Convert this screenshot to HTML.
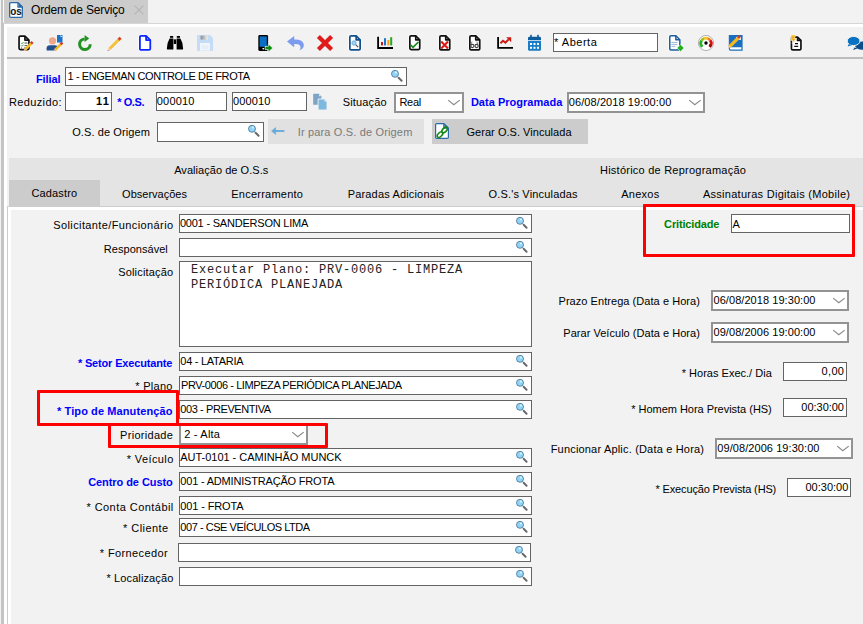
<!DOCTYPE html>
<html><head><meta charset="utf-8"><style>
html,body{margin:0;padding:0}
body{width:863px;height:624px;overflow:hidden;position:relative;background:#f2f2f2;font-family:"Liberation Sans", sans-serif}
.t{position:absolute;white-space:nowrap;line-height:14px;font-family:"Liberation Sans", sans-serif}
svg{position:absolute}
</style></head><body>
<div style="position:absolute;left:1px;top:0px;width:3px;height:624px;background:#c4c4c4"></div>
<div style="position:absolute;left:3px;top:0px;width:1px;height:23px;background:#fafafa"></div>
<div style="position:absolute;left:4px;top:23px;width:3px;height:601px;background:#fff"></div>
<div style="position:absolute;left:4px;top:0px;width:144px;height:23px;background:#cccccc"></div>
<div style="position:absolute;left:4px;top:23px;width:859px;height:1px;background:#d6d6d6"></div>
<div style="position:absolute;left:4px;top:24px;width:859px;height:3px;background:#fff"></div>
<div style="position:absolute;left:7px;top:57px;width:856px;height:2px;background:#bdbdbd"></div>
<div style="position:absolute;left:9px;top:158px;width:854px;height:48px;background:#e4e4e4"></div>
<div style="position:absolute;left:9px;top:180px;width:91px;height:26px;background:#cccccc"></div>
<div style="position:absolute;left:7px;top:206px;width:856px;height:1px;background:#cdcdcd"></div>
<div style="position:absolute;left:7px;top:206px;width:1px;height:418px;background:#cdcdcd"></div>
<div style="position:absolute;left:8px;top:207px;width:855px;height:3px;background:#fff"></div>
<div style="position:absolute;left:8px;top:207px;width:3px;height:417px;background:#fff"></div>
<div style="position:absolute;left:65px;top:67px;width:342px;height:19px;background:#fff;border:1px solid #646464;box-sizing:border-box"></div>
<svg style="position:absolute;left:390px;top:69px" width="14" height="14" viewBox="0 0 14 14"><line x1="8.6" y1="8.8" x2="11.6" y2="11.8" stroke="#6a6a6a" stroke-width="2" stroke-linecap="round"/><circle cx="5" cy="4.8" r="3.5" fill="#92d4f7" stroke="#3f6f8f" stroke-width="0.8"/><circle cx="6" cy="3.6" r="1" fill="#e6f6ff"/></svg>
<div style="position:absolute;left:65px;top:92px;width:47px;height:19px;background:#fff;border:1px solid #646464;box-sizing:border-box"></div>
<div style="position:absolute;left:156px;top:92px;width:71px;height:19px;background:#fff;border:1px solid #646464;box-sizing:border-box"></div>
<div style="position:absolute;left:232px;top:92px;width:75px;height:19px;background:#fff;border:1px solid #646464;box-sizing:border-box"></div>
<div style="position:absolute;left:394px;top:92px;width:70px;height:21px;background:#fff;border:2px solid #939393;box-sizing:border-box"></div>
<svg style="position:absolute;left:447px;top:99.0px" width="14" height="8" viewBox="0 0 14 8"><polyline points="1.2,1.1 6.8,5.8 12.7,1.1" fill="none" stroke="#8a8a8a" stroke-width="1.2"/></svg>
<div style="position:absolute;left:567px;top:92px;width:138px;height:21px;background:#fff;border:2px solid #939393;box-sizing:border-box"></div>
<svg style="position:absolute;left:688px;top:99.0px" width="14" height="8" viewBox="0 0 14 8"><polyline points="1.2,1.1 6.8,5.8 12.7,1.1" fill="none" stroke="#8a8a8a" stroke-width="1.2"/></svg>
<div style="position:absolute;left:157px;top:122px;width:107px;height:20px;background:#fff;border:1px solid #646464;box-sizing:border-box"></div>
<svg style="position:absolute;left:247px;top:124px" width="14" height="14" viewBox="0 0 14 14"><line x1="8.6" y1="8.8" x2="11.6" y2="11.8" stroke="#6a6a6a" stroke-width="2" stroke-linecap="round"/><circle cx="5" cy="4.8" r="3.5" fill="#92d4f7" stroke="#3f6f8f" stroke-width="0.8"/><circle cx="6" cy="3.6" r="1" fill="#e6f6ff"/></svg>
<div style="position:absolute;left:553px;top:33px;width:105px;height:19px;background:#fff;border:1px solid #646464;box-sizing:border-box"></div>
<div style="position:absolute;left:268px;top:119px;width:156px;height:25px;background:#e1e1e1"></div>
<div style="position:absolute;left:432px;top:119px;width:156px;height:25px;background:#cccccc"></div>
<div style="position:absolute;left:179px;top:214px;width:353px;height:19px;background:#fff;border:1px solid #646464;box-sizing:border-box"></div>
<svg style="position:absolute;left:515px;top:216px" width="14" height="14" viewBox="0 0 14 14"><line x1="8.6" y1="8.8" x2="11.6" y2="11.8" stroke="#6a6a6a" stroke-width="2" stroke-linecap="round"/><circle cx="5" cy="4.8" r="3.5" fill="#92d4f7" stroke="#3f6f8f" stroke-width="0.8"/><circle cx="6" cy="3.6" r="1" fill="#e6f6ff"/></svg>
<div style="position:absolute;left:179px;top:238px;width:353px;height:19px;background:#fff;border:1px solid #646464;box-sizing:border-box"></div>
<svg style="position:absolute;left:515px;top:240px" width="14" height="14" viewBox="0 0 14 14"><line x1="8.6" y1="8.8" x2="11.6" y2="11.8" stroke="#6a6a6a" stroke-width="2" stroke-linecap="round"/><circle cx="5" cy="4.8" r="3.5" fill="#92d4f7" stroke="#3f6f8f" stroke-width="0.8"/><circle cx="6" cy="3.6" r="1" fill="#e6f6ff"/></svg>
<div style="position:absolute;left:179px;top:352px;width:353px;height:19px;background:#fff;border:1px solid #646464;box-sizing:border-box"></div>
<svg style="position:absolute;left:515px;top:354px" width="14" height="14" viewBox="0 0 14 14"><line x1="8.6" y1="8.8" x2="11.6" y2="11.8" stroke="#6a6a6a" stroke-width="2" stroke-linecap="round"/><circle cx="5" cy="4.8" r="3.5" fill="#92d4f7" stroke="#3f6f8f" stroke-width="0.8"/><circle cx="6" cy="3.6" r="1" fill="#e6f6ff"/></svg>
<div style="position:absolute;left:179px;top:376px;width:353px;height:19px;background:#fff;border:1px solid #646464;box-sizing:border-box"></div>
<svg style="position:absolute;left:515px;top:378px" width="14" height="14" viewBox="0 0 14 14"><line x1="8.6" y1="8.8" x2="11.6" y2="11.8" stroke="#6a6a6a" stroke-width="2" stroke-linecap="round"/><circle cx="5" cy="4.8" r="3.5" fill="#92d4f7" stroke="#3f6f8f" stroke-width="0.8"/><circle cx="6" cy="3.6" r="1" fill="#e6f6ff"/></svg>
<div style="position:absolute;left:179px;top:400px;width:353px;height:19px;background:#fff;border:1px solid #646464;box-sizing:border-box"></div>
<svg style="position:absolute;left:515px;top:402px" width="14" height="14" viewBox="0 0 14 14"><line x1="8.6" y1="8.8" x2="11.6" y2="11.8" stroke="#6a6a6a" stroke-width="2" stroke-linecap="round"/><circle cx="5" cy="4.8" r="3.5" fill="#92d4f7" stroke="#3f6f8f" stroke-width="0.8"/><circle cx="6" cy="3.6" r="1" fill="#e6f6ff"/></svg>
<div style="position:absolute;left:179px;top:448px;width:353px;height:19px;background:#fff;border:1px solid #646464;box-sizing:border-box"></div>
<svg style="position:absolute;left:515px;top:450px" width="14" height="14" viewBox="0 0 14 14"><line x1="8.6" y1="8.8" x2="11.6" y2="11.8" stroke="#6a6a6a" stroke-width="2" stroke-linecap="round"/><circle cx="5" cy="4.8" r="3.5" fill="#92d4f7" stroke="#3f6f8f" stroke-width="0.8"/><circle cx="6" cy="3.6" r="1" fill="#e6f6ff"/></svg>
<div style="position:absolute;left:179px;top:472px;width:353px;height:19px;background:#fff;border:1px solid #646464;box-sizing:border-box"></div>
<svg style="position:absolute;left:515px;top:474px" width="14" height="14" viewBox="0 0 14 14"><line x1="8.6" y1="8.8" x2="11.6" y2="11.8" stroke="#6a6a6a" stroke-width="2" stroke-linecap="round"/><circle cx="5" cy="4.8" r="3.5" fill="#92d4f7" stroke="#3f6f8f" stroke-width="0.8"/><circle cx="6" cy="3.6" r="1" fill="#e6f6ff"/></svg>
<div style="position:absolute;left:179px;top:496px;width:353px;height:19px;background:#fff;border:1px solid #646464;box-sizing:border-box"></div>
<svg style="position:absolute;left:515px;top:498px" width="14" height="14" viewBox="0 0 14 14"><line x1="8.6" y1="8.8" x2="11.6" y2="11.8" stroke="#6a6a6a" stroke-width="2" stroke-linecap="round"/><circle cx="5" cy="4.8" r="3.5" fill="#92d4f7" stroke="#3f6f8f" stroke-width="0.8"/><circle cx="6" cy="3.6" r="1" fill="#e6f6ff"/></svg>
<div style="position:absolute;left:179px;top:518px;width:353px;height:19px;background:#fff;border:1px solid #646464;box-sizing:border-box"></div>
<svg style="position:absolute;left:515px;top:520px" width="14" height="14" viewBox="0 0 14 14"><line x1="8.6" y1="8.8" x2="11.6" y2="11.8" stroke="#6a6a6a" stroke-width="2" stroke-linecap="round"/><circle cx="5" cy="4.8" r="3.5" fill="#92d4f7" stroke="#3f6f8f" stroke-width="0.8"/><circle cx="6" cy="3.6" r="1" fill="#e6f6ff"/></svg>
<div style="position:absolute;left:179px;top:567px;width:353px;height:19px;background:#fff;border:1px solid #646464;box-sizing:border-box"></div>
<svg style="position:absolute;left:515px;top:569px" width="14" height="14" viewBox="0 0 14 14"><line x1="8.6" y1="8.8" x2="11.6" y2="11.8" stroke="#6a6a6a" stroke-width="2" stroke-linecap="round"/><circle cx="5" cy="4.8" r="3.5" fill="#92d4f7" stroke="#3f6f8f" stroke-width="0.8"/><circle cx="6" cy="3.6" r="1" fill="#e6f6ff"/></svg>
<div style="position:absolute;left:178px;top:543px;width:353px;height:19px;background:#fff;border:1px solid #646464;box-sizing:border-box"></div>
<svg style="position:absolute;left:514px;top:545px" width="14" height="14" viewBox="0 0 14 14"><line x1="8.6" y1="8.8" x2="11.6" y2="11.8" stroke="#6a6a6a" stroke-width="2" stroke-linecap="round"/><circle cx="5" cy="4.8" r="3.5" fill="#92d4f7" stroke="#3f6f8f" stroke-width="0.8"/><circle cx="6" cy="3.6" r="1" fill="#e6f6ff"/></svg>
<div style="position:absolute;left:179px;top:261px;width:353px;height:86px;background:#fff;border:1px solid #646464;box-sizing:border-box"></div>
<div style="position:absolute;left:179px;top:424px;width:129px;height:21px;background:#fff;border:2px solid #939393;box-sizing:border-box"></div>
<svg style="position:absolute;left:291px;top:431.0px" width="14" height="8" viewBox="0 0 14 8"><polyline points="1.2,1.1 6.8,5.8 12.7,1.1" fill="none" stroke="#8a8a8a" stroke-width="1.2"/></svg>
<div style="position:absolute;left:731px;top:214px;width:119px;height:19px;background:#fff;border:1px solid #646464;box-sizing:border-box"></div>
<div style="position:absolute;left:711px;top:290px;width:138px;height:21px;background:#fff;border:2px solid #939393;box-sizing:border-box"></div>
<svg style="position:absolute;left:832px;top:297.0px" width="14" height="8" viewBox="0 0 14 8"><polyline points="1.2,1.1 6.8,5.8 12.7,1.1" fill="none" stroke="#8a8a8a" stroke-width="1.2"/></svg>
<div style="position:absolute;left:711px;top:322px;width:138px;height:21px;background:#fff;border:2px solid #939393;box-sizing:border-box"></div>
<svg style="position:absolute;left:832px;top:329.0px" width="14" height="8" viewBox="0 0 14 8"><polyline points="1.2,1.1 6.8,5.8 12.7,1.1" fill="none" stroke="#8a8a8a" stroke-width="1.2"/></svg>
<div style="position:absolute;left:783px;top:362px;width:64px;height:19px;background:#fff;border:1px solid #646464;box-sizing:border-box"></div>
<div style="position:absolute;left:783px;top:398px;width:64px;height:19px;background:#fff;border:1px solid #646464;box-sizing:border-box"></div>
<div style="position:absolute;left:715px;top:438px;width:138px;height:21px;background:#fff;border:2px solid #939393;box-sizing:border-box"></div>
<svg style="position:absolute;left:836px;top:445.0px" width="14" height="8" viewBox="0 0 14 8"><polyline points="1.2,1.1 6.8,5.8 12.7,1.1" fill="none" stroke="#8a8a8a" stroke-width="1.2"/></svg>
<div style="position:absolute;left:787px;top:478px;width:64px;height:19px;background:#fff;border:1px solid #646464;box-sizing:border-box"></div>
<div style="position:absolute;left:37px;top:390px;width:142px;height:36px;border:3px solid #ff0000;box-sizing:border-box;border-radius:1px"></div>
<div style="position:absolute;left:108px;top:423px;width:220px;height:25px;border:3px solid #ff0000;box-sizing:border-box;border-radius:1px"></div>
<div style="position:absolute;left:643px;top:204px;width:212px;height:53px;border:3px solid #ff0000;box-sizing:border-box;border-radius:1px"></div>
<div class="t" style="left:31.0px;top:3px;font-size:12px;font-weight:normal;color:#000;letter-spacing:-0.194px">Ordem de Serviço</div>
<div class="t" style="left:36.0px;top:72px;font-size:11px;font-weight:bold;color:#0000ff;letter-spacing:-0.113px">Filial</div>
<div class="t" style="left:8.9px;top:95px;font-size:11px;font-weight:normal;color:#000;letter-spacing:0.382px">Reduzido:</div>
<div class="t" style="left:117.2px;top:95px;font-size:11px;font-weight:bold;color:#0000ff;letter-spacing:-0.409px">* O.S.</div>
<div class="t" style="left:72.2px;top:125px;font-size:11px;font-weight:normal;color:#000;letter-spacing:0.098px">O.S. de Origem</div>
<div class="t" style="left:342.8px;top:95px;font-size:11px;font-weight:normal;color:#000;letter-spacing:0.127px">Situação</div>
<div class="t" style="left:470.9px;top:95px;font-size:11px;font-weight:bold;color:#0000ff;letter-spacing:0.022px">Data Programada</div>
<div class="t" style="left:297.7px;top:125px;font-size:11px;font-weight:normal;color:#7a7a7a;letter-spacing:0.159px">Ir para O.S. de Origem</div>
<div class="t" style="left:466.5px;top:125px;font-size:11px;font-weight:normal;color:#000;letter-spacing:0.034px">Gerar O.S. Vinculada</div>
<div class="t" style="left:67.5px;top:69px;font-size:11px;font-weight:normal;color:#000;letter-spacing:-0.387px">1 - ENGEMAN CONTROLE DE FROTA</div>
<div class="t" style="left:96.0px;top:94px;font-size:11px;font-weight:bold;color:#000;letter-spacing:1.259px">11</div>
<div class="t" style="left:156.8px;top:94px;font-size:11px;font-weight:normal;color:#000;letter-spacing:0.196px">000010</div>
<div class="t" style="left:233.1px;top:94px;font-size:11px;font-weight:normal;color:#000;letter-spacing:0.136px">000010</div>
<div class="t" style="left:399.4px;top:95px;font-size:11px;font-weight:normal;color:#000;letter-spacing:-0.275px">Real</div>
<div class="t" style="left:568.8px;top:95px;font-size:11px;font-weight:normal;color:#000;letter-spacing:0.087px">06/08/2018 19:00:00</div>
<div class="t" style="left:554.0px;top:35px;font-size:11px;font-weight:normal;color:#000;letter-spacing:0.523px">* Aberta</div>
<div class="t" style="left:174.2px;top:163px;font-size:11px;font-weight:normal;color:#000;letter-spacing:0.044px">Avaliação de O.S.s</div>
<div class="t" style="left:600.0px;top:163px;font-size:11px;font-weight:normal;color:#000;letter-spacing:0.235px">Histórico de Reprogramação</div>
<div class="t" style="left:31.5px;top:186px;font-size:11px;font-weight:normal;color:#000;letter-spacing:0.137px">Cadastro</div>
<div class="t" style="left:122.1px;top:187px;font-size:11px;font-weight:normal;color:#000;letter-spacing:0.009px">Observações</div>
<div class="t" style="left:231.3px;top:187px;font-size:11px;font-weight:normal;color:#000;letter-spacing:0.237px">Encerramento</div>
<div class="t" style="left:347.7px;top:187px;font-size:11px;font-weight:normal;color:#000;letter-spacing:0.167px">Paradas Adicionais</div>
<div class="t" style="left:488.5px;top:187px;font-size:11px;font-weight:normal;color:#000;letter-spacing:0.170px">O.S.&#x27;s Vinculadas</div>
<div class="t" style="left:621.2px;top:187px;font-size:11px;font-weight:normal;color:#000;letter-spacing:0.259px">Anexos</div>
<div class="t" style="left:702.9px;top:187px;font-size:11px;font-weight:normal;color:#000;letter-spacing:0.275px">Assinaturas Digitais (Mobile)</div>
<div class="t" style="left:53.3px;top:218px;font-size:11px;font-weight:normal;color:#000;letter-spacing:0.387px">Solicitante/Funcionário</div>
<div class="t" style="left:103.8px;top:242px;font-size:11px;font-weight:normal;color:#000;letter-spacing:0.041px">Responsável</div>
<div class="t" style="left:118.2px;top:265px;font-size:11px;font-weight:normal;color:#000;letter-spacing:0.170px">Solicitação</div>
<div class="t" style="left:77.9px;top:356px;font-size:11px;font-weight:bold;color:#0000ff;letter-spacing:-0.159px">* Setor Executante</div>
<div class="t" style="left:135.3px;top:379px;font-size:11px;font-weight:normal;color:#000;letter-spacing:0.269px">* Plano</div>
<div class="t" style="left:57.0px;top:404px;font-size:11px;font-weight:bold;color:#0000ff;letter-spacing:0.101px">* Tipo de Manutenção</div>
<div class="t" style="left:120.1px;top:428px;font-size:11px;font-weight:normal;color:#000;letter-spacing:0.295px">Prioridade</div>
<div class="t" style="left:126.7px;top:452px;font-size:11px;font-weight:normal;color:#000;letter-spacing:0.397px">* Veículo</div>
<div class="t" style="left:88.2px;top:475px;font-size:11px;font-weight:bold;color:#0000ff;letter-spacing:-0.069px">Centro de Custo</div>
<div class="t" style="left:86.4px;top:500px;font-size:11px;font-weight:normal;color:#000;letter-spacing:0.453px">* Conta Contábil</div>
<div class="t" style="left:123.1px;top:521px;font-size:11px;font-weight:normal;color:#000;letter-spacing:0.440px">* Cliente</div>
<div class="t" style="left:99.8px;top:546px;font-size:11px;font-weight:normal;color:#000;letter-spacing:0.391px">* Fornecedor</div>
<div class="t" style="left:106.5px;top:571px;font-size:11px;font-weight:normal;color:#000;letter-spacing:0.114px">* Localização</div>
<div class="t" style="left:179.9px;top:216px;font-size:11px;font-weight:normal;color:#000;letter-spacing:-0.208px">0001 - SANDERSON LIMA</div>
<div class="t" style="left:180.3px;top:354px;font-size:11px;font-weight:normal;color:#000;letter-spacing:-0.267px">04 - LATARIA</div>
<div class="t" style="left:181.0px;top:378px;font-size:11px;font-weight:normal;color:#000;letter-spacing:-0.416px">PRV-0006 - LIMPEZA PERIÓDICA PLANEJADA</div>
<div class="t" style="left:180.3px;top:402px;font-size:11px;font-weight:normal;color:#000;letter-spacing:-0.407px">003 - PREVENTIVA</div>
<div class="t" style="left:184.2px;top:427px;font-size:11px;font-weight:normal;color:#000;letter-spacing:0.221px">2 - Alta</div>
<div class="t" style="left:180.3px;top:450px;font-size:11px;font-weight:normal;color:#000;letter-spacing:-0.029px">AUT-0101 - CAMINHÃO MUNCK</div>
<div class="t" style="left:180.3px;top:474px;font-size:11px;font-weight:normal;color:#000;letter-spacing:-0.188px">001 - ADMINISTRAÇÃO FROTA</div>
<div class="t" style="left:180.3px;top:499px;font-size:11px;font-weight:normal;color:#000;letter-spacing:-0.129px">001 - FROTA</div>
<div class="t" style="left:180.3px;top:520px;font-size:11px;font-weight:normal;color:#000;letter-spacing:-0.450px">007 - CSE VEÍCULOS LTDA</div>
<div class="t" style="left:664.1px;top:217px;font-size:11px;font-weight:bold;color:#008000;letter-spacing:-0.146px">Criticidade</div>
<div class="t" style="left:732.5px;top:217px;font-size:11px;font-weight:normal;color:#000;letter-spacing:0.000px">A</div>
<div class="t" style="left:558.5px;top:294px;font-size:11px;font-weight:normal;color:#000;letter-spacing:0.053px">Prazo Entrega (Data e Hora)</div>
<div class="t" style="left:713.5px;top:293px;font-size:11px;font-weight:normal;color:#000;letter-spacing:0.059px">06/08/2018 19:30:00</div>
<div class="t" style="left:563.3px;top:326px;font-size:11px;font-weight:normal;color:#000;letter-spacing:0.033px">Parar Veículo (Data e Hora)</div>
<div class="t" style="left:713.5px;top:325px;font-size:11px;font-weight:normal;color:#000;letter-spacing:0.059px">09/08/2006 19:00:00</div>
<div class="t" style="left:681.7px;top:366px;font-size:11px;font-weight:normal;color:#000;letter-spacing:0.013px">* Horas Exec./ Dia</div>
<div class="t" style="left:821.5px;top:364px;font-size:11px;font-weight:normal;color:#000;letter-spacing:0.359px">0,00</div>
<div class="t" style="left:631.2px;top:402px;font-size:11px;font-weight:normal;color:#000;letter-spacing:-0.024px">* Homem Hora Prevista (HS)</div>
<div class="t" style="left:801.3px;top:400px;font-size:11px;font-weight:normal;color:#000;letter-spacing:-0.018px">00:30:00</div>
<div class="t" style="left:550.7px;top:442px;font-size:11px;font-weight:normal;color:#000;letter-spacing:0.184px">Funcionar Aplic. (Data e Hora)</div>
<div class="t" style="left:717.3px;top:441px;font-size:11px;font-weight:normal;color:#000;letter-spacing:0.070px">09/08/2006 19:30:00</div>
<div class="t" style="left:655.5px;top:482px;font-size:11px;font-weight:normal;color:#000;letter-spacing:-0.144px">* Execução Prevista (HS)</div>
<div class="t" style="left:805.5px;top:480px;font-size:11px;font-weight:normal;color:#000;letter-spacing:-0.004px">00:30:00</div>
<div class="t" style="left:191px;top:263px;font-family:'Liberation Mono', monospace;font-size:12px;letter-spacing:0.8px;line-height:14px;color:#222">Executar Plano: PRV-0006 - LIMPEZA</div>
<div class="t" style="left:191px;top:278px;font-family:'Liberation Mono', monospace;font-size:12px;letter-spacing:0.8px;line-height:14px;color:#222">PERIÓDICA PLANEJADA</div>
<svg style="left:16px;top:33px" width="20" height="20" viewBox="0 0 20 20"><g transform="translate(2.2,2.2)"><path d="M2.05,0.85 H6.75 L10.75,4.85 V13.15 Q10.75,14.35 9.55,14.35 H2.05 Q0.85,14.35 0.85,13.15 V2.05 Q0.85,0.85 2.05,0.85 Z" fill="#fff" stroke="#fff" stroke-width="3.3" stroke-linejoin="round" opacity="0.7"/><path d="M2.05,0.85 H6.75 L10.75,4.85 V13.15 Q10.75,14.35 9.55,14.35 H2.05 Q0.85,14.35 0.85,13.15 V2.05 Q0.85,0.85 2.05,0.85 Z" fill="#fff" stroke="#111" stroke-width="1.7" stroke-linejoin="round"/><path d="M6.75,0.85 V4.85 H10.75" fill="none" stroke="#111" stroke-width="1.7" stroke-linejoin="round"/></g><path d="M5,9.8 l1,1 l1.6,-1.8 M5,12.4 l1,1 l1.6,-1.8" stroke="#3a9a3a" stroke-width="0.9" fill="none"/><path d="M8.5,10 h3 M8.5,12.6 h3 M5,15 h1 M8,15 h2" stroke="#555" stroke-width="1" /><path d="M9.2,16.6 L15.6,10" stroke="#f2b824" stroke-width="2.8" stroke-linecap="butt"/><path d="M15,10.6 L16.6,9" stroke="#d23c2a" stroke-width="2.8"/><path d="M8.2,17.6 L9.6,16.2" stroke="#f1b79a" stroke-width="2"/></svg>
<svg style="left:44px;top:33px" width="22" height="20" viewBox="0 0 22 20"><rect x="13" y="2" width="5.5" height="7.5" fill="#1a73c8"/><path d="M16.5,2 l2,2 h-2z" fill="#cfe6ff"/><circle cx="8.5" cy="7.8" r="3.6" fill="#eea68a"/><path d="M2.6,17.6 V15.2 Q2.6,12.2 6,12.2 H11 Q13.5,12.2 14,14 L11.5,17.6 Z" fill="#1f4f8f"/><path d="M11.2,16.8 L17.2,10.8" stroke="#f2b824" stroke-width="2.6"/><path d="M16.6,11.4 L18.4,9.6" stroke="#d23c2a" stroke-width="2.6"/><path d="M10.4,17.6 L11.6,16.4" stroke="#f1b79a" stroke-width="2"/></svg>
<svg style="left:75px;top:33px" width="20" height="20" viewBox="0 0 20 20"><path d="M15.2,11.2 A5.3,5.3 0 1 1 9.6,5.9" fill="none" stroke="#229322" stroke-width="3"/><path d="M9.6,1.9 L14.2,5.5 L9.6,9.1 Z" fill="#229322"/></svg>
<svg style="left:106px;top:35px" width="18" height="18" viewBox="0 0 18 18"><path d="M3.6,13.8 L13.2,4.2" stroke="#f4c03a" stroke-width="3"/><path d="M12.6,4.8 L14.6,2.8" stroke="#d8402a" stroke-width="3"/><path d="M2.4,15.2 L4,13.4" stroke="#f2c6a6" stroke-width="2.2"/><path d="M1.8,15.8 L2.6,15" stroke="#777" stroke-width="1"/></svg>
<svg style="left:138px;top:34px" width="15" height="18" viewBox="0 0 15 18"><g transform="translate(1,1)"><path d="M2.1,0.9 H7.099999999999999 L11.299999999999999,5.1000000000000005 V13.700000000000001 Q11.299999999999999,14.9 10.1,14.9 H2.1 Q0.9,14.9 0.9,13.700000000000001 V2.1 Q0.9,0.9 2.1,0.9 Z" fill="#fff" stroke="#fff" stroke-width="3.4000000000000004" stroke-linejoin="round" opacity="0.7"/><path d="M2.1,0.9 H7.099999999999999 L11.299999999999999,5.1000000000000005 V13.700000000000001 Q11.299999999999999,14.9 10.1,14.9 H2.1 Q0.9,14.9 0.9,13.700000000000001 V2.1 Q0.9,0.9 2.1,0.9 Z" fill="#fff" stroke="#0a28ff" stroke-width="1.8" stroke-linejoin="round"/><path d="M7.099999999999999,0.9 V5.1000000000000005 H11.299999999999999" fill="none" stroke="#0a28ff" stroke-width="1.8" stroke-linejoin="round"/></g></svg>
<svg style="left:166px;top:35px" width="18" height="16" viewBox="0 0 18 16"><rect x="4" y="1" width="3.2" height="1.8" fill="#000"/><rect x="10.8" y="1" width="3.2" height="1.8" fill="#000"/><rect x="7.8" y="4.4" width="2.4" height="4.6" fill="#000"/><path d="M3.6,3.6 H7.4 V14.6 H1.4 Q0.8,14.6 0.9,13.6 L1.6,8 Z" fill="#000"/><path d="M10.6,3.6 H14.4 L16.4,8 L17.1,13.6 Q17.2,14.6 16.6,14.6 H10.6 Z" fill="#000"/></svg>
<svg style="left:196px;top:34px" width="18" height="18" viewBox="0 0 18 18"><path d="M1.6,1 H14 L17,4 V16 Q17,17 16,17 H2 Q1,17 1,16 V2 Q1,1 1.6,1 Z" fill="#c4dcf6"/><defs><linearGradient id="fg" x1="0" x2="1"><stop offset="0" stop-color="#8a8a8a"/><stop offset="1" stop-color="#f0f0f0"/></linearGradient></defs><rect x="4.6" y="1.6" width="7" height="4" fill="url(#fg)"/><rect x="4" y="9" width="10" height="7.6" fill="#f2f6fb"/><path d="M5.5,12 h7 M5.5,14 h7" stroke="#dbe6f2" stroke-width="1"/></svg>
<svg style="left:256px;top:33px" width="18" height="19" viewBox="0 0 18 19"><rect x="2.3" y="2.1" width="9.8" height="15.8" rx="1.4" fill="#000"/><rect x="3.6" y="3.4" width="7.2" height="10.4" fill="#0a6fc2"/><rect x="6.5" y="15" width="1.6" height="1.4" fill="#fff"/><path d="M9.2,13.4 h3 v-2.6 l4.6,4.2 l-4.6,4.2 v-2.6 h-3 z" fill="#0a8a0a" stroke="#fff" stroke-width="0.7"/></svg>
<svg style="left:285px;top:34px" width="20" height="18" viewBox="0 0 20 18"><path d="M9.2,2 L2,7.6 L9.2,13.2 V10 Q14.6,9.6 15.4,12.4 Q16,14.2 14.6,16.2 Q19.2,14.6 18.8,10.6 Q18.2,5.2 9.2,5.4 Z" fill="#7b9bee"/></svg>
<svg style="left:315px;top:33px" width="20" height="20" viewBox="0 0 20 20"><path d="M3.4,3.4 L16.6,16.6 M16.6,3.4 L3.4,16.6" stroke="#e01b1b" stroke-width="4.2" stroke-linecap="butt"/></svg>
<svg style="left:348px;top:34px" width="15" height="18" viewBox="0 0 15 18"><g transform="translate(1,1)"><path d="M2.05,0.85 H7.15 L11.15,4.85 V13.750000000000002 Q11.15,14.950000000000001 9.950000000000001,14.950000000000001 H2.05 Q0.85,14.950000000000001 0.85,13.750000000000002 V2.05 Q0.85,0.85 2.05,0.85 Z" fill="#fff" stroke="#fff" stroke-width="3.3" stroke-linejoin="round" opacity="0.7"/><path d="M2.05,0.85 H7.15 L11.15,4.85 V13.750000000000002 Q11.15,14.950000000000001 9.950000000000001,14.950000000000001 H2.05 Q0.85,14.950000000000001 0.85,13.750000000000002 V2.05 Q0.85,0.85 2.05,0.85 Z" fill="#fff" stroke="#0e4f8c" stroke-width="1.7" stroke-linejoin="round"/><path d="M7.15,0.85 V4.85 H11.15" fill="none" stroke="#0e4f8c" stroke-width="1.7" stroke-linejoin="round"/></g><path d="M7.6,10.6 L10.2,13.2" stroke="#555" stroke-width="1.2"/><circle cx="6" cy="9" r="2.2" fill="#9cd6f6" stroke="#5aa0c8" stroke-width="0.7"/></svg>
<svg style="left:376px;top:36px" width="18" height="14" viewBox="0 0 18 14"><path d="M2.1,0.8 V12 H17" fill="none" stroke="#000" stroke-width="1.8"/><rect x="5" y="6" width="2" height="3.4" fill="#cc1a12"/><rect x="8" y="2.2" width="2" height="7.2" fill="#1a78c8"/><rect x="11.4" y="4" width="2" height="5.4" fill="#f79a1a"/><rect x="14.2" y="1.2" width="2" height="8.2" fill="#22aa22"/></svg>
<svg style="left:408px;top:34px" width="15" height="18" viewBox="0 0 15 18"><g transform="translate(1,1)"><path d="M2.05,0.85 H6.75 L10.75,4.85 V13.350000000000001 Q10.75,14.55 9.55,14.55 H2.05 Q0.85,14.55 0.85,13.350000000000001 V2.05 Q0.85,0.85 2.05,0.85 Z" fill="#fff" stroke="#fff" stroke-width="3.3" stroke-linejoin="round" opacity="0.7"/><path d="M2.05,0.85 H6.75 L10.75,4.85 V13.350000000000001 Q10.75,14.55 9.55,14.55 H2.05 Q0.85,14.55 0.85,13.350000000000001 V2.05 Q0.85,0.85 2.05,0.85 Z" fill="#fff" stroke="#111" stroke-width="1.7" stroke-linejoin="round"/><path d="M6.75,0.85 V4.85 H10.75" fill="none" stroke="#111" stroke-width="1.7" stroke-linejoin="round"/></g><path d="M2.6,11 L5,13.4 L10.4,8" fill="none" stroke="#128a12" stroke-width="1.7"/></svg>
<svg style="left:438px;top:34px" width="15" height="18" viewBox="0 0 15 18"><g transform="translate(1,1)"><path d="M2.05,0.85 H6.75 L10.75,4.85 V13.750000000000002 Q10.75,14.950000000000001 9.55,14.950000000000001 H2.05 Q0.85,14.950000000000001 0.85,13.750000000000002 V2.05 Q0.85,0.85 2.05,0.85 Z" fill="#fff" stroke="#fff" stroke-width="3.3" stroke-linejoin="round" opacity="0.7"/><path d="M2.05,0.85 H6.75 L10.75,4.85 V13.750000000000002 Q10.75,14.950000000000001 9.55,14.950000000000001 H2.05 Q0.85,14.950000000000001 0.85,13.750000000000002 V2.05 Q0.85,0.85 2.05,0.85 Z" fill="#fff" stroke="#111" stroke-width="1.7" stroke-linejoin="round"/><path d="M6.75,0.85 V4.85 H10.75" fill="none" stroke="#111" stroke-width="1.7" stroke-linejoin="round"/></g><path d="M3.2,7.6 L10,14.4 M10,7.6 L3.2,14.4" stroke="#e01818" stroke-width="2.1"/></svg>
<svg style="left:468px;top:34px" width="15" height="18" viewBox="0 0 15 18"><g transform="translate(1,1)"><path d="M2.05,0.85 H6.75 L10.75,4.85 V13.750000000000002 Q10.75,14.950000000000001 9.55,14.950000000000001 H2.05 Q0.85,14.950000000000001 0.85,13.750000000000002 V2.05 Q0.85,0.85 2.05,0.85 Z" fill="#fff" stroke="#fff" stroke-width="3.3" stroke-linejoin="round" opacity="0.7"/><path d="M2.05,0.85 H6.75 L10.75,4.85 V13.750000000000002 Q10.75,14.950000000000001 9.55,14.950000000000001 H2.05 Q0.85,14.950000000000001 0.85,13.750000000000002 V2.05 Q0.85,0.85 2.05,0.85 Z" fill="#fff" stroke="#111" stroke-width="1.7" stroke-linejoin="round"/><path d="M6.75,0.85 V4.85 H10.75" fill="none" stroke="#111" stroke-width="1.7" stroke-linejoin="round"/></g><path d="M3.2,10 L4,7.6 M9.6,10 L8.8,7.6" stroke="#666" stroke-width="0.8"/><circle cx="4.4" cy="12" r="1.6" fill="none" stroke="#444" stroke-width="1.1"/><circle cx="8.6" cy="12" r="1.6" fill="none" stroke="#444" stroke-width="1.1"/></svg>
<svg style="left:496px;top:36px" width="18" height="14" viewBox="0 0 18 14"><path d="M2.1,1 V11.8 H17" fill="none" stroke="#000" stroke-width="1.8"/><path d="M4.4,7.2 L7,4.8 L9.4,6.6 L12.6,3.4" fill="none" stroke="#cc1a12" stroke-width="2"/><path d="M10.2,1.2 H15.2 V6.2 Z" fill="#cc1a12"/></svg>
<svg style="left:527px;top:34px" width="16" height="18" viewBox="0 0 16 18"><rect x="3.2" y="0.8" width="1.6" height="3" fill="#0d5c9c"/><rect x="10.2" y="0.8" width="1.6" height="3" fill="#0d5c9c"/><path d="M1,4.2 Q1,2.8 2.4,2.8 H12.6 Q14,2.8 14,4.2 V6 H1 Z" fill="#0d5c9c"/><path d="M1,6.8 H14 V15.4 Q14,16.8 12.6,16.8 H2.4 Q1,16.8 1,15.4 Z" fill="#1b7dc6"/><g fill="#fff"><rect x="3" y="9" width="2" height="2"/><rect x="6.5" y="9" width="2" height="2"/><rect x="10" y="9" width="2" height="2"/><rect x="3" y="12.8" width="2" height="2"/><rect x="6.5" y="12.8" width="2" height="2"/><rect x="10" y="12.8" width="2" height="2"/></g></svg>
<svg style="left:668px;top:34px" width="17" height="18" viewBox="0 0 17 18"><g transform="translate(1,1)"><path d="M1.95,0.75 H6.85 L10.85,4.75 V13.850000000000001 Q10.85,15.05 9.65,15.05 H1.95 Q0.75,15.05 0.75,13.850000000000001 V1.95 Q0.75,0.75 1.95,0.75 Z" fill="#fff" stroke="#fff" stroke-width="3.1" stroke-linejoin="round" opacity="0.7"/><path d="M1.95,0.75 H6.85 L10.85,4.75 V13.850000000000001 Q10.85,15.05 9.65,15.05 H1.95 Q0.75,15.05 0.75,13.850000000000001 V1.95 Q0.75,0.75 1.95,0.75 Z" fill="#fff" stroke="#1a5e9e" stroke-width="1.5" stroke-linejoin="round"/><path d="M6.85,0.75 V4.75 H10.85" fill="none" stroke="#1a5e9e" stroke-width="1.5" stroke-linejoin="round"/></g><path d="M3.4,8.4 h6 M3.4,10.4 h6 M3.4,12.4 h4" stroke="#9ab8d8" stroke-width="1"/><path d="M9,14 L12.6,10.6 L16,14 L12.6,17.4 Z" fill="#22b022" stroke="#fff" stroke-width="0.5"/></svg>
<svg style="left:697px;top:34px" width="18" height="18" viewBox="0 0 18 18"><circle cx="9" cy="9" r="7.6" fill="#fff" stroke="#a0a0a0" stroke-width="0.8"/><path d="M5.4,12.8 A4.8,4.8 0 0 1 4.6,6.6" fill="none" stroke="#2ab02a" stroke-width="2.8"/><path d="M4.6,6.6 A4.8,4.8 0 0 1 7.2,4.5" fill="none" stroke="#9cc21a" stroke-width="2.8"/><path d="M7.2,4.5 A4.8,4.8 0 0 1 10.8,4.5" fill="none" stroke="#f1c21a" stroke-width="2.8"/><path d="M10.8,4.5 A4.8,4.8 0 0 1 13.2,6.4" fill="none" stroke="#f07a20" stroke-width="2.8"/><path d="M13.2,6.4 A4.8,4.8 0 0 1 12.8,12.6" fill="none" stroke="#d81010" stroke-width="2.8"/><path d="M13.6,10.4 A4.8,4.8 0 0 1 12.6,12.8" fill="none" stroke="#a00808" stroke-width="2.8"/><circle cx="9" cy="9" r="2.6" fill="#fff"/><circle cx="9" cy="9" r="1.7" fill="#000"/></svg>
<svg style="left:727px;top:34px" width="17" height="18" viewBox="0 0 17 18"><path d="M2.4,1 H15.6 V16.8 H3.6 Q1.8,16.8 1.8,15 V1.6 Q1.8,1 2.4,1 Z" fill="#1a6fbe"/><path d="M3.6,13.2 H14.4 V15.4 H3.6 Q2.8,15.4 2.8,14.3 Q2.8,13.2 3.6,13.2 Z" fill="#fff"/><rect x="9" y="3" width="5" height="3" fill="#d7e6f3"/><path d="M2.6,12.6 L11.8,3.4" stroke="#f5b820" stroke-width="3.4"/><path d="M11,3.8 L12.8,2" stroke="#d23c2a" stroke-width="2.6"/><path d="M1.6,13.2 L2.8,12" stroke="#f2c6a6" stroke-width="2"/></svg>
<svg style="left:788px;top:33px" width="16" height="19" viewBox="0 0 16 19"><g transform="translate(2.6,3.2)"><path d="M2.05,0.85 H6.949999999999999 L10.35,4.25 V12.55 Q10.35,13.75 9.15,13.75 H2.05 Q0.85,13.75 0.85,12.55 V2.05 Q0.85,0.85 2.05,0.85 Z" fill="#fff" stroke="#fff" stroke-width="3.3" stroke-linejoin="round" opacity="0.7"/><path d="M2.05,0.85 H6.949999999999999 L10.35,4.25 V12.55 Q10.35,13.75 9.15,13.75 H2.05 Q0.85,13.75 0.85,12.55 V2.05 Q0.85,0.85 2.05,0.85 Z" fill="#fff" stroke="#111" stroke-width="1.7" stroke-linejoin="round"/><path d="M6.949999999999999,0.85 V4.25 H10.35" fill="none" stroke="#111" stroke-width="1.7" stroke-linejoin="round"/></g><path d="M3,2 H7.6 L6.6,5.6 H8.4 L4.2,10.8 L4.6,7.4 H2.8 Z" fill="#f7b519" stroke="#f2f2f2" stroke-width="0.6"/><path d="M7,10.6 h3 M6.2,13.4 h4" stroke="#111" stroke-width="1.2"/></svg>
<svg style="left:846px;top:34px" width="17" height="18" viewBox="0 0 17 18"><ellipse cx="16.4" cy="11.6" rx="7.4" ry="4.2" fill="#0c4e8a"/><path d="M8.6,13.6 L7,16 L11.6,14.4 Z" fill="#0c4e8a"/><ellipse cx="7.6" cy="7" rx="6.4" ry="4.6" fill="#0a72c2" stroke="#f2f2f2" stroke-width="1"/><path d="M2.8,10 L1.6,12.4 L6.2,11 Z" fill="#0a72c2"/></svg>
<svg style="left:8px;top:1px" width="16" height="18" viewBox="0 0 16 18"><g transform="translate(1,1)"><path d="M1.85,0.65 H8.95 L13.35,5.050000000000001 V14.15 Q13.35,15.35 12.15,15.35 H1.85 Q0.65,15.35 0.65,14.15 V1.85 Q0.65,0.65 1.85,0.65 Z" fill="#fff" stroke="#2a6aa8" stroke-width="1.3" stroke-linejoin="round"/><path d="M8.95,0.65 V5.050000000000001 H13.35" fill="none" stroke="#2a6aa8" stroke-width="1.3" stroke-linejoin="round"/></g><path d="M10.6,1.6 L15,6 H10.6 Z" fill="#2a6aa8"/><text x="2.2" y="14.3" font-family="Liberation Sans" font-weight="bold" font-size="10" fill="#111">os</text></svg>
<svg style="left:133px;top:3.5px" width="12" height="12" viewBox="0 0 12 12"><path d="M1.6,1.6 L10.4,10.4 M10.4,1.6 L1.6,10.4" stroke="#b4b4b4" stroke-width="1.2"/></svg>
<svg style="left:312px;top:93px" width="17" height="18" viewBox="0 0 17 18"><path d="M1.2,0.8 H7 L9.4,3.2 V11.8 H1.2 Z" fill="#7ba4c6"/><path d="M7,0.8 V3.2 H9.4" fill="#dfe9f2"/><path d="M6.1,6 H12.6 L15,8.4 V17 H6.1 Z" fill="#7db9df" stroke="#f2f2f2" stroke-width="0.9"/><path d="M12.4,6.4 V8.6 H14.6 Z" fill="#e6f2fa"/></svg>
<svg style="left:270px;top:126px" width="16" height="10" viewBox="0 0 16 10"><path d="M3,5 H14.4" stroke="#6aaad6" stroke-width="1.9"/><path d="M1.6,5 L5.6,1.6 L5.6,8.4 Z" fill="#6aaad6" stroke="#6aaad6" stroke-width="0.6" stroke-linejoin="round"/></svg>
<svg style="left:434px;top:122px" width="16" height="18" viewBox="0 0 16 18"><g transform="translate(1,1)"><path d="M1.7999999999999998,0.6 H8.8 L13.4,5.199999999999999 V14.200000000000001 Q13.4,15.4 12.200000000000001,15.4 H1.7999999999999998 Q0.6,15.4 0.6,14.200000000000001 V1.7999999999999998 Q0.6,0.6 1.7999999999999998,0.6 Z" fill="#fff" stroke="#2a6aa8" stroke-width="1.2" stroke-linejoin="round"/><path d="M8.8,0.6 V5.199999999999999 H13.4" fill="none" stroke="#2a6aa8" stroke-width="1.2" stroke-linejoin="round"/></g><path d="M10.4,1.6 L14.4,5.6 H10.4 Z" fill="#2a6aa8"/><ellipse cx="6" cy="12.6" rx="3.4" ry="1.9" transform="rotate(-45 6 12.6)" fill="none" stroke="#128a12" stroke-width="1.6"/><ellipse cx="10.6" cy="8" rx="3.4" ry="1.9" transform="rotate(-45 10.6 8)" fill="none" stroke="#128a12" stroke-width="1.6"/></svg>
</body></html>
